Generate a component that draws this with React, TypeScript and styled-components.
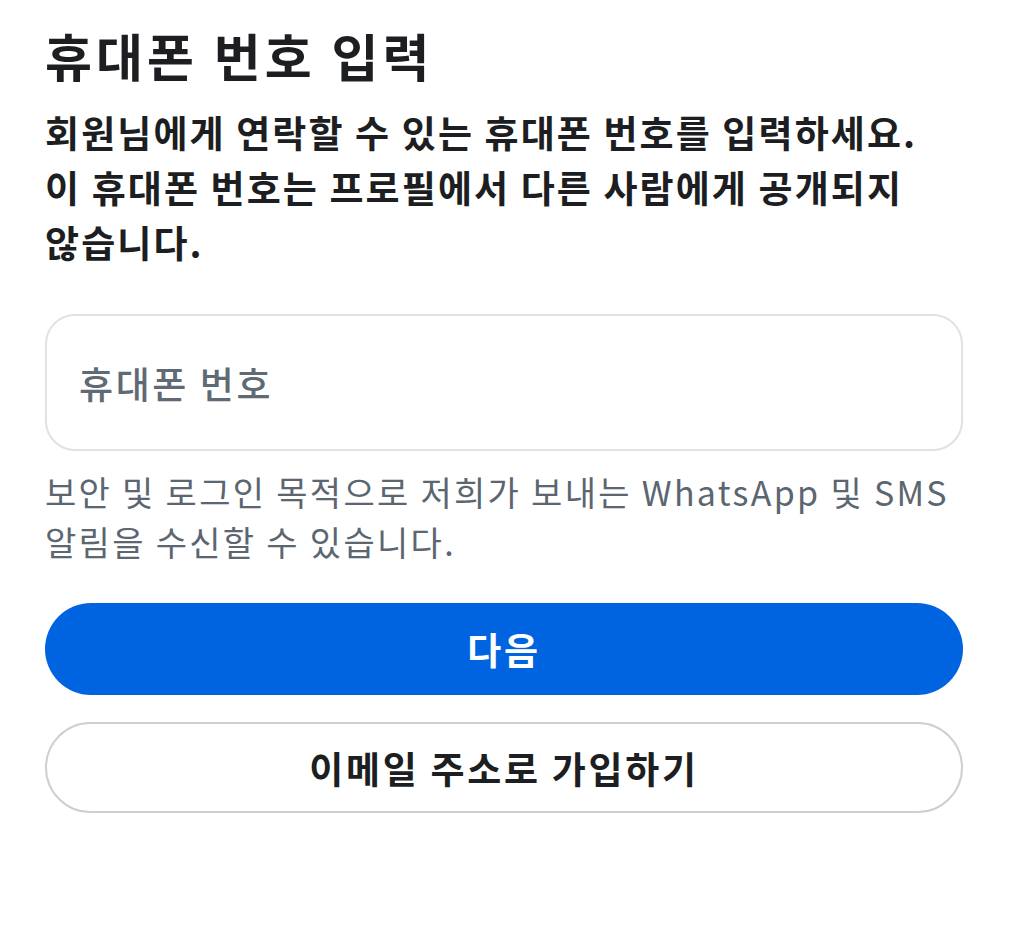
import React from "react";
import styled, { createGlobalStyle } from "styled-components";

const Global = createGlobalStyle`
  html, body { margin: 0; padding: 0; background: #ffffff; }
  body { font-family: "Noto Sans CJK KR", "Noto Sans", sans-serif; }
`;

const Page = styled.main`
  width: 918px;
  padding: 23px 0 0 45px;
  display: flex;
  flex-direction: column;
`;

const Title = styled.h1`
  margin: 0;
  font-size: 51px;
  line-height: 64px;
  font-weight: 700;
  color: #1c1e21;
  letter-spacing: 4.1px;
`;

const Lead = styled.p`
  margin: 18px 0 0;
  font-size: 37px;
  line-height: 55px;
  font-weight: 700;
  color: #1c1e21;
  letter-spacing: 2.1px;
`;

const Field = styled.div`
  margin-top: 44px;
  height: 137px;
  box-sizing: border-box;
  border: 2px solid #dfe2e5;
  border-radius: 30px;
  display: flex;
  align-items: center;
  padding: 0 32px;
`;

const Placeholder = styled.span`
  font-size: 37px;
  font-weight: 500;
  color: #5f6a75;
  letter-spacing: 2.6px;
`;

const Helper = styled.p`
  margin: 16px 0 0;
  font-size: 34px;
  line-height: 50px;
  font-weight: 400;
  color: #5b6670;
  letter-spacing: 2.3px;
`;

const Button = styled.button<{ $primary?: boolean }>`
  font-family: "Noto Sans CJK KR", "Noto Sans", sans-serif;
  width: 100%;
  height: ${(p) => (p.$primary ? "92px" : "91px")};
  border-radius: 46px;
  font-size: 37px;
  font-weight: 700;
  letter-spacing: 2.7px;
  display: flex;
  align-items: center;
  justify-content: center;
  border: ${(p) => (p.$primary ? "none" : "2px solid #ccd0d5")};
  background: ${(p) => (p.$primary ? "#0064e0" : "#ffffff")};
  color: ${(p) => (p.$primary ? "#ffffff" : "#1c1e21")};
  box-sizing: border-box;
  padding: 0;
`;

const Actions = styled.div`
  margin-top: 36px;
  display: flex;
  flex-direction: column;
  gap: 27px;
`;

export default function App() {
  return (
    <>
      <Global />
      <Page>
        <Title>휴대폰 번호 입력</Title>
        <Lead>
          회원님에게 연락할 수 있는 휴대폰 번호를 입력하세요.
          <br />이 휴대폰 번호는 프로필에서 다른 사람에게 공개되지
          <br />
          않습니다.
        </Lead>
        <Field>
          <Placeholder>휴대폰 번호</Placeholder>
        </Field>
        <Helper>
          보안 및 로그인 목적으로 저희가 보내는 WhatsApp 및 SMS
          <br />
          알림을 수신할 수 있습니다.
        </Helper>
        <Actions>
          <Button $primary>다음</Button>
          <Button>이메일 주소로 가입하기</Button>
        </Actions>
      </Page>
    </>
  );
}
